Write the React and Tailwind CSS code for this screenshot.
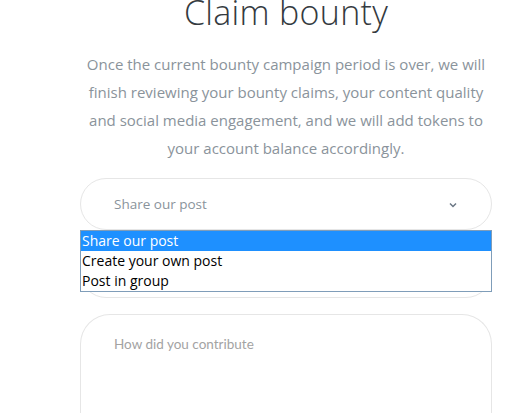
import { useState } from 'react';

const options = ['Share our post', 'Create your own post', 'Post in group'];

const App = () => {
  const [selected] = useState(0);

  return (
    <div className="min-h-[413px] bg-white overflow-hidden" style={{ fontFamily: '"Open Sans", sans-serif' }}>
      <div className="ml-[80px] w-[412px] -mt-[12px]">
        <h1 className="text-center text-[34px] font-light text-[#343a40] leading-[48px] tracking-[0.3px]">
          Claim bounty
        </h1>

        <p className="mt-[14px] text-center text-[15px] leading-[28px] text-[#8a939b] px-[4px]">
          Once the current bounty campaign period is over, we will finish reviewing your bounty claims, your content quality and social media engagement, and we will add tokens to your account balance accordingly.
        </p>

        <div className="relative mt-[16px]">
          <div className="h-[52px] rounded-full border border-[#e6e6e6] flex items-center justify-between pl-[33px] pr-[34px]">
            <span className="text-[13.5px] text-[#8a939b]">Share our post</span>
            <svg width="8" height="6" viewBox="0 0 8 6" className="mt-[1px]">
              <path d="M1 1.5 L4 4.5 L7 1.5" fill="none" stroke="#6b7785" strokeWidth="1.5" />
            </svg>
          </div>

          <div className="mt-[16px] h-[52px] rounded-full border border-[#e6e6e6]" />

          <div className="mt-[16px] h-[110px] rounded-t-[30px] border border-b-0 border-[#e6e6e6] pl-[33px] pt-[16px]">
            <span className="text-[13.5px] text-[#a3a3a3]" style={{ fontFamily: 'Lato, sans-serif' }}>
              How did you contribute
            </span>
          </div>

          <ul className="absolute left-0 top-[52px] w-[412px] border border-[#7f9db9] bg-white text-[14px] leading-[20px]">
            {options.map((o, i) => (
              <li
                key={o}
                className={i === selected ? 'bg-[#1e90ff] text-white pl-[1px]' : 'text-black pl-[1px]'}
              >
                {o}
              </li>
            ))}
          </ul>
        </div>
      </div>
    </div>
  );
};

export default App;
